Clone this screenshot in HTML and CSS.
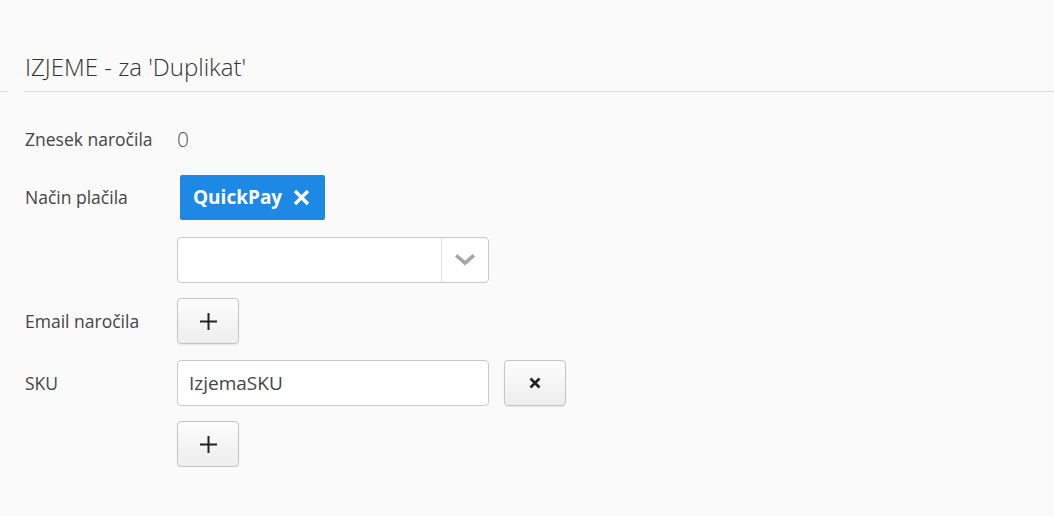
FILE: index.html
```html
<!DOCTYPE html>
<html>
<head>
<meta charset="utf-8">
<link rel="stylesheet" href="styles.css">
</head>
<body>
<div class="page">
  <div class="header">
    <div class="stub"></div>
    <h2 class="title">IZJEME - za 'Duplikat'</h2>
  </div>
  <div class="form">
    <div class="row row-static">
      <div class="label">Znesek naročila</div>
      <div class="value">0</div>
    </div>
    <div class="row row-tag">
      <div class="label">Način plačila</div>
      <div class="field">
        <span class="tag">QuickPay
          <svg class="tag-x" width="17" height="17" viewBox="0 0 17 17"><path d="M2 2 L15 15 M15 2 L2 15" stroke="#fff" stroke-width="3.4"/></svg>
        </span>
      </div>
    </div>
    <div class="row row-select">
      <div class="label"></div>
      <div class="select">
        <div class="select-body"></div>
        <div class="select-arrow">
          <svg width="20" height="12" viewBox="0 0 20 12"><path d="M2.5 2.5 L10 9 L17.5 2.5" fill="none" stroke="#a6a6a6" stroke-width="3.6" stroke-linecap="square"/></svg>
        </div>
      </div>
    </div>
    <div class="row row-btn">
      <div class="label">Email naročila</div>
      <button class="btn">
        <svg width="17" height="17" viewBox="0 0 17 17"><path d="M8.5 0 V17 M0 8.5 H17" stroke="#222" stroke-width="2"/></svg>
      </button>
    </div>
    <div class="row row-sku">
      <div class="label">SKU</div>
      <div class="inline">
        <div class="input">IzjemaSKU</div>
        <button class="btn">
          <svg width="12" height="12" viewBox="0 0 12 12"><path d="M1.5 1.5 L10.5 10.5 M10.5 1.5 L1.5 10.5" stroke="#222" stroke-width="2.6"/></svg>
        </button>
      </div>
    </div>
    <div class="row row-btn2">
      <div class="label"></div>
      <button class="btn">
        <svg width="17" height="17" viewBox="0 0 17 17"><path d="M8.5 0 V17 M0 8.5 H17" stroke="#222" stroke-width="2"/></svg>
      </button>
    </div>
  </div>
</div>
</body>
</html>
```

FILE: styles.css
```css
html, body {
  margin: 0;
  padding: 0;
  background: #fafafa;
  font-family: "Open Sans", "Noto Sans", sans-serif;
  color: #444;
}
.page {
  padding-top: 50px;
}
.header {
  display: flex;
  align-items: flex-end;
}
.stub {
  width: 8px;
  border-bottom: 1px solid #dcdcdc;
  margin-right: 16px;
}
.title {
  flex: 1;
  margin: 0;
  font-weight: 300;
  font-size: 24px;
  line-height: 33px;
  color: #333;
  padding-left: 1px;
  padding-bottom: 8px;
  border-bottom: 1px solid #dcdcdc;
}
.form {
  padding-left: 25px;
  padding-top: 30px;
}
.row {
  display: flex;
  align-items: center;
}
.label {
  width: 152px;
  font-size: 17.5px;
  color: #444;
}
.value {
  font-size: 21px;
  font-weight: 300;
  color: #555;
}
.row-static { height: 34px; }
.row-tag { margin-top: 18px; height: 46px; }
.field { padding-left: 3px; }
.tag {
  display: inline-flex;
  align-items: center;
  height: 45px;
  padding: 0 0 0 13px;
  background: #1e88e5;
  color: #fff;
  font-weight: 700;
  font-size: 19px;
  border-radius: 2px;
  box-sizing: border-box;
  width: 145px;
}
.tag-x {
  margin-left: 11px;
  margin-top: 1px;
}
.row-select { margin-top: 17px; }
.select {
  display: flex;
  width: 312px;
  height: 46px;
  box-sizing: border-box;
  border: 1px solid #c8c8c8;
  border-radius: 4px;
  background: #fff;
}
.select-body { flex: 1; }
.select-arrow {
  width: 46px;
  border-left: 1px solid #e2e2e2;
  display: flex;
  align-items: center;
  justify-content: center;
}
.row-btn { margin-top: 15px; }
.btn {
  width: 62px;
  height: 46px;
  box-sizing: border-box;
  border: 1px solid #c4c4c4;
  border-radius: 4px;
  background: linear-gradient(#fdfdfd, #ededed);
  box-shadow: 0 1px 1px rgba(0,0,0,0.08);
  padding: 0;
  display: flex;
  align-items: center;
  justify-content: center;
}
.row-sku { margin-top: 16px; }
.inline { display: flex; gap: 15px; }
.input {
  width: 312px;
  height: 46px;
  box-sizing: border-box;
  border: 1px solid #c8c8c8;
  border-radius: 4px;
  background: #fff;
  font-size: 19px;
  color: #444;
  padding: 0 11px;
  display: flex;
  align-items: center;
}
.row-btn2 { margin-top: 15px; }
```
